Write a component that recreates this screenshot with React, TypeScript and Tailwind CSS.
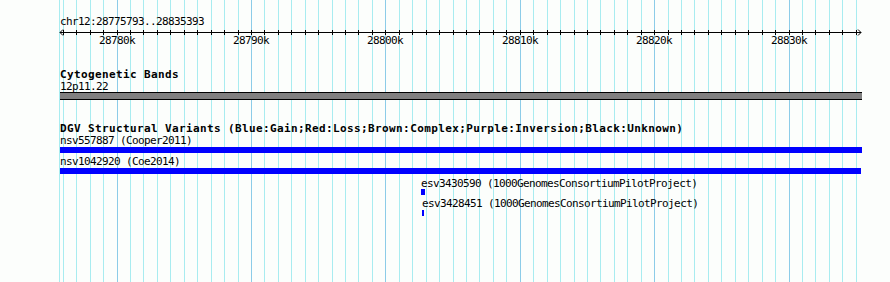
import React from "react";

// chr12 view window + pixel scale
const START = 28775793;
const END = 28835393;
const SCALE = 0.01344;
const X0 = 60;

const px = (bp: number) => X0 + (bp - START) * SCALE;

const kbs: number[] = [];
for (let k = 28776; k <= 28835; k++) kbs.push(k);

const mono = "font-['DejaVu_Sans_Mono',monospace] text-[11px] leading-[12px] h-[12px] pt-[1px] tracking-[-0.62px] text-black whitespace-nowrap";
const bold = "font-['DejaVu_Sans_Mono',monospace] font-bold text-[11px] leading-[12px] h-[12px] pt-[1px] tracking-[0.38px] text-black whitespace-nowrap";

interface Variant {
  id: string;
  source: string;
  start: number;
  width: number;
}

const smallVariants: Variant[] = [
  { id: "esv3430590", source: "1000GenomesConsortiumPilotProject", start: 421, width: 4 },
  { id: "esv3428451", source: "1000GenomesConsortiumPilotProject", start: 422, width: 2 },
];

const Grid = () => (
  <svg className="absolute inset-0" width={890} height={282} shapeRendering="crispEdges">
    <line x1={59.5} x2={59.5} y1={0} y2={282} stroke="#a8ecf0" />
    {kbs.map((k) => {
      const x = Math.round(px(k * 1000)) + 0.5;
      return (
        <line
          key={k}
          x1={x}
          x2={x}
          y1={0}
          y2={282}
          stroke={k % 10 === 0 ? "#8ccce8" : "#a8ecf0"}
        />
      );
    })}
  </svg>
);

const Ruler = () => {
  const end = px(END) - X0;
  return (
    <svg width={802} height={20} className="block overflow-visible" shapeRendering="crispEdges">
      <line x1={0} x2={end} y1={5.5} y2={5.5} stroke="#000" />
      <path d={`M3 2.5 L0 5.5 L3 8.5`} fill="none" stroke="#000" shapeRendering="auto" />
      <path d={`M${end - 3} 2.5 L${end} 5.5 L${end - 3} 8.5`} fill="none" stroke="#000" shapeRendering="auto" />
      {kbs.map((k) => {
        const x = Math.round(px(k * 1000)) - X0 + 0.5;
        return <line key={k} x1={x} x2={x} y1={3} y2={8} stroke="#000" />;
      })}
      {kbs
        .filter((k) => k % 10 === 0)
        .map((k) => (
          <text
            key={k}
            x={Math.round(px(k * 1000)) - X0}
            y={17}
            textAnchor="middle"
            fontFamily="DejaVu Sans Mono, monospace"
            fontSize={11}
            letterSpacing={-0.62}
            fill="#000"
          >
            {k}k
          </text>
        ))}
    </svg>
  );
};

export default function App() {
  return (
    <div className="relative w-[890px] h-[282px] overflow-hidden bg-[#fcfefc]">
      <Grid />
      <div className="relative pl-[60px] pt-[15px]">
        <div className={mono}>chr12:28775793..28835393</div>
        <Ruler />

        {/* Cytogenetic bands */}
        <div className={`${bold} mt-[21px]`}>Cytogenetic Bands</div>
        <div className={mono}>12p11.22</div>
        <div className="w-[802px] h-[8px] bg-[#808080] border-y border-black" />

        {/* DGV structural variants */}
        <div className={`${bold} mt-[22px]`}>
          DGV Structural Variants (Blue:Gain;Red:Loss;Brown:Complex;Purple:Inversion;Black:Unknown)
        </div>
        <div className={mono}>nsv557887 (Cooper2011)</div>
        <div className="mt-[1px] w-[802px] h-[6px] bg-[#0000ff]" />
        <div className={`${mono} mt-[2px]`}>nsv1042920 (Coe2014)</div>
        <div className="mt-[1px] w-[801px] h-[6px] bg-[#0000ff]" />

        <div className="mt-[3px] flex flex-col">
          {smallVariants.map((v, i) => (
            <div key={v.id} className={i > 0 ? "mt-[2px]" : ""}>
              <div className={mono} style={{ marginLeft: v.start - X0 }}>
                {v.id} ({v.source})
              </div>
              <div
                className={`${i > 0 ? "mt-[1px]" : ""} h-[6px] bg-[#0000ff]`}
                style={{ marginLeft: v.start - X0, width: v.width }}
              />
            </div>
          ))}
        </div>
      </div>
    </div>
  );
}
